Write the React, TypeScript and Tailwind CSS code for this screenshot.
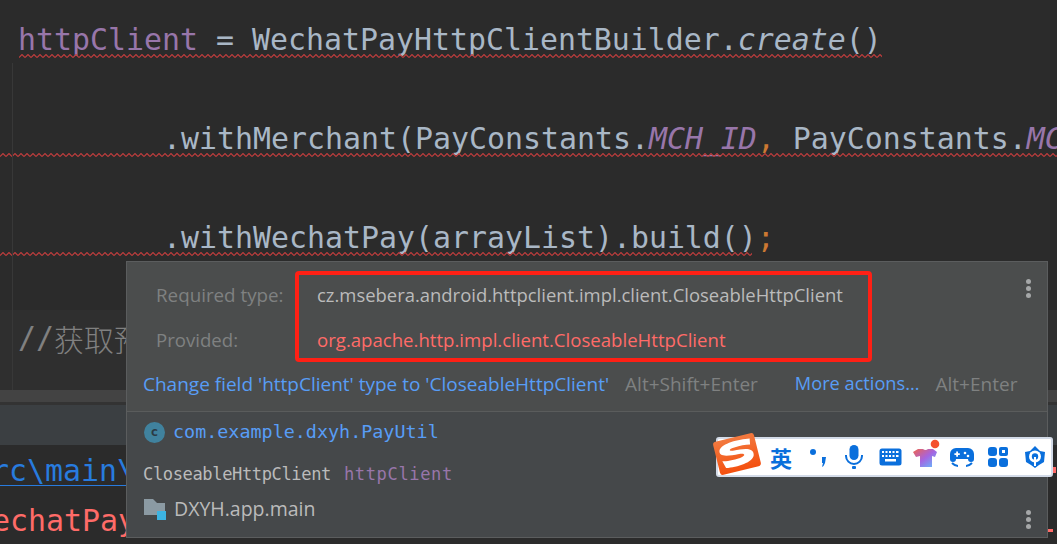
import { useId } from "react";

function Squiggle({ className }: { className: string }) {
  const id = useId();
  return (
    <svg className={className} height="4" aria-hidden="true">
      <defs>
        <pattern id={id} width="6" height="4" patternUnits="userSpaceOnUse">
          <path d="M0 3.5 L3 0.5 L6 3.5" fill="none" stroke="#c03c3c" strokeWidth="1.1" />
        </pattern>
      </defs>
      <rect width="100%" height="4" fill={`url(#${id})`} />
    </svg>
  );
}

function CodeLine({ indent, children }: { indent?: boolean; children: React.ReactNode }) {
  return (
    <div
      className={`h-[40px] whitespace-pre text-[29.9px] leading-[40px] text-[#a9b7c6] ${
        indent ? "pl-[163px]" : "pl-[18px]"
      }`}
    >
      {children}
    </div>
  );
}

function MoreDots({ className }: { className: string }) {
  return (
    <div className={`flex flex-col gap-[2px] ${className}`}>
      <div className="size-[5px] rounded-full bg-[#a5a7a8]" />
      <div className="size-[5px] rounded-full bg-[#a5a7a8]" />
      <div className="size-[5px] rounded-full bg-[#a5a7a8]" />
    </div>
  );
}

function SogouLogo() {
  return (
    <svg width="50" height="50" viewBox="0 0 50 50" className="-my-[6px] -ml-[6px] shrink-0 overflow-visible">
      <defs>
        <linearGradient id="sogou" x1="0" y1="0" x2="0" y2="1">
          <stop offset="0" stopColor="#f2793f" />
          <stop offset="1" stopColor="#f4500f" />
        </linearGradient>
      </defs>
      <g transform="rotate(-14 25 22)">
        <rect x="4" y="5" width="42" height="34" rx="3" fill="url(#sogou)" />
        <path
          d="M41 10 C30 8 13 8 9 14 C6 21 16 22 27 22.500 C34 23 33 26 27 26.500 C20 27 13 26.500 9 25.500 L11 33 C22 35 39 34 41 27 C43 19 31 18.500 23 18 C17 17.500 18 15 24 15 C30 14.500 35 15 40 16 Z"
          fill="#fff"
        />
      </g>
    </svg>
  );
}

function ImeBar() {
  return (
    <div className="absolute left-[716px] top-[437px] flex h-[40px] w-[337px] items-center rounded-[3px] border-2 border-[#d3dbe8] bg-white text-[#0a6fdc]">
      <SogouLogo />
      <span className="ml-[8px] w-[24px] font-['Noto_Sans_CJK_SC',sans-serif] text-[22px] leading-none font-bold">
        英
      </span>
      {/* punctuation mode */}
      <svg width="22" height="22" viewBox="0 0 22 22" className="ml-[14px]">
        <circle cx="5" cy="6" r="3" fill="currentColor" />
        <path d="M14 11 h4 l-1 6 q-1 3 -3 4 l1 -4 h-1 z" fill="currentColor" />
      </svg>
      {/* mic */}
      <svg width="20" height="26" viewBox="0 0 20 26" className="ml-[14px]">
        <rect x="5.500" y="1" width="9" height="15" rx="4.500" fill="currentColor" />
        <path d="M2 11 v1 a8 8 0 0 0 16 0 v-1" fill="none" stroke="currentColor" strokeWidth="2" />
        <rect x="8" y="22" width="4" height="3" rx="1" fill="currentColor" />
      </svg>
      {/* keyboard */}
      <svg width="23" height="18" viewBox="0 0 23 18" className="ml-[15px]">
        <rect x="0.500" y="0.500" width="22" height="17" rx="2.500" fill="currentColor" />
        <path
          d="M3 3h2v2H3zM6.500 3h2v2h-2zM10 3h2v2h-2zM13.500 3h2v2h-2zM17 3h2.500v2H17zM3 7h2v2H3zM6.500 7h2v2h-2zM10 7h2v2h-2zM13.500 7h2v2h-2zM17 7h2.500v2H17zM6 11h11v2.500H6z"
          fill="#fff"
        />
      </svg>
      {/* skin shirt */}
      <svg width="30" height="30" viewBox="0 0 30 30" className="ml-[9px] overflow-visible">
        <defs>
          <linearGradient id="shirt" x1="0" y1="0" x2="1" y2="1">
            <stop offset="0" stopColor="#f0634b" />
            <stop offset="0.500" stopColor="#a664e0" />
            <stop offset="1" stopColor="#5ec0ff" />
          </linearGradient>
        </defs>
        <path d="M7 7 L12 7 Q14.500 9 17 7 L22 7 L26 10 L24 15 L21 14 L21 25 L9 25 L9 14 L5 15 L2 10 Z" fill="url(#shirt)" />
        <circle cx="24" cy="2" r="4.300" fill="#f4502f" />
      </svg>
      {/* game */}
      <svg width="24" height="21" viewBox="0 0 24 21" className="ml-[9px]">
        <path d="M6 1 h12 a6 6 0 0 1 6 6 v5 a3 3 0 0 1 -6 0 H6 a3 3 0 0 1 -6 0 V7 a6 6 0 0 1 6 -6z" fill="currentColor" />
        <path d="M6 8h2V6h2v2h2v2h-2v2H8v-2H6z" fill="#fff" transform="translate(-1 -1) scale(0.9)" />
        <circle cx="15" cy="6" r="1.300" fill="#fff" />
        <circle cx="18" cy="9" r="1.300" fill="#fff" />
        <path d="M2 16 q3 3 6 3 M22 16 q-3 3 -6 3" fill="none" stroke="currentColor" strokeWidth="2" />
      </svg>
      {/* toolbox */}
      <svg width="20" height="20" viewBox="0 0 20 20" className="ml-[14px]">
        <rect width="9" height="9" rx="3" fill="currentColor" />
        <rect x="11" width="9" height="9" rx="2" fill="currentColor" />
        <rect x="14" y="3" width="3" height="3" fill="#fff" />
        <rect y="11" width="9" height="9" rx="3" fill="currentColor" />
        <rect x="11" y="11" width="9" height="9" rx="3" fill="currentColor" />
      </svg>
      {/* menu */}
      <svg width="22" height="24" viewBox="0 0 22 24" className="ml-[16px]">
        <path d="M11 1 L16 6 L21 7 L20 17 L15 20 L11 23 L7 20 L2 17 L1 7 L6 6 Z" fill="currentColor" />
        <circle cx="11" cy="11.500" r="6" fill="#fff" />
        <circle cx="11" cy="11.500" r="3.200" fill="currentColor" />
        <rect x="10" y="12" width="2" height="9" fill="#fff" />
      </svg>
    </div>
  );
}

function ProblemPopup() {
  return (
    <div className="absolute left-[126px] top-[261px] flex h-[277px] w-[922px] flex-col border border-[#5b5d5e] bg-[#4b4d4d] font-['Open_Sans',sans-serif]">
      <div className="relative h-[150px] shrink-0 border-b border-[#5a5c5c]">
        <div className="flex h-[100px] flex-col text-[18.6px]">
          <div className="flex h-[66px] items-center">
            <span className="ml-[29px] w-[161px] text-[18.8px] text-[#7f8181]">Required type:</span>
            <span className="text-[18.45px] text-[#bbbbbb]">cz.msebera.android.httpclient.impl.client.CloseableHttpClient</span>
            <MoreDots className="mr-[16px] ml-auto -mt-[14px]" />
          </div>
          <div className="mt-[1px] flex h-[22px] items-center">
            <span className="ml-[29px] w-[161px] text-[#7f8181]">Provided:</span>
            <span className="text-[#ff6b68]">org.apache.http.impl.client.CloseableHttpClient</span>
          </div>
        </div>
        <div className="flex h-[44px] items-center pl-[16px] text-[19px]">
          <span className="text-[#589df6]">Change field 'httpClient' type to 'CloseableHttpClient'</span>
          <span className="ml-[16px] text-[#7f8181]">Alt+Shift+Enter</span>
          <span className="ml-[37px] text-[18.2px] text-[#589df6]">More actions...</span>
          <span className="ml-[16px] text-[#7f8181]">Alt+Enter</span>
        </div>
        {/* red annotation drawn over the screenshot */}
        <div className="absolute left-[168px] top-[9px] h-[91px] w-[577px] rounded-[4px] border-4 border-[#ff2015]" />
      </div>
      <div className="flex grow flex-col bg-[#45484a] pl-[17px]">
        <div className="mt-[8px] flex h-[24px] items-center gap-[8px]">
          <div className="flex size-[21px] items-center justify-center rounded-full bg-[#40829e] font-['DejaVu_Sans_Mono',monospace] text-[13px] font-bold text-[#2b3a44]">
            c
          </div>
          <span className="font-['DejaVu_Sans_Mono',monospace] text-[18.4px] text-[#589df6]">com.example.dxyh.PayUtil</span>
        </div>
        <div className="-ml-[1px] mt-[20px] flex h-[20px] gap-[13px] font-['DejaVu_Sans_Mono',monospace] text-[17.1px] leading-[20px]">
          <span className="tracking-[-0.4px] text-[#bbbbbb]">CloseableHttpClient</span>
          <span className="tracking-[0.6px] text-[#9876aa]">httpClient</span>
        </div>
        <div className="mt-[13px] flex h-[24px] items-center gap-[6px]">
          <svg width="24" height="22" viewBox="0 0 24 22">
            <path d="M0 1 H9 L13 5 H21 V17 H0 Z" fill="#8b9aa3" />
            <rect x="13" y="13" width="9" height="9" fill="#3cb4e3" />
          </svg>
          <span className="text-[19.5px] text-[#bbbbbb]">DXYH.app.main</span>
          <MoreDots className="mr-[16px] mt-[20px] ml-auto" />
        </div>
      </div>
    </div>
  );
}

export default function App() {
  return (
    <div className="relative h-[544px] w-[1057px] overflow-hidden bg-[#2b2b2b] font-['DejaVu_Sans_Mono',monospace]">
      <div className="relative h-[390px] pt-[20px]">
        {/* indent guide */}
        <div className="absolute top-[63px] bottom-0 left-[12px] w-px bg-[#383838]" />
        <CodeLine>
          <span className="text-[#9876aa]">httpClient</span> = WechatPayHttpClientBuilder.<i>create</i>()
        </CodeLine>
        <Squiggle className="-mt-[6px] ml-[19px] block w-[863px]" />
        <div className="h-[61px]" />
        <CodeLine indent>
          .withMerchant(PayConstants.<i className="text-[#9876aa]">MCH_ID</i>
          <span className="text-[#cc7832]">,</span> PayConstants.<i className="text-[#9876aa]">MCH_SERIAL</i>
        </CodeLine>
        <Squiggle className="-mt-[6px] block w-full" />
        <div className="h-[61px]" />
        <CodeLine indent>
          .withWechatPay(arrayList).build()<span className="text-[#cc7832]">;</span>
        </CodeLine>
        <Squiggle className="-mt-[6px] block w-[752px]" />
        <div className="mt-[54px] flex h-[80px] items-start whitespace-pre bg-[#2f2f2f] pt-[8px] pl-[18px] text-[29.9px] leading-[40px] text-[#808080]">
          //<span className="font-['Noto_Sans_CJK_SC',sans-serif] font-light">获取预</span>
        </div>
      </div>
      <div className="h-[12px] bg-[#434343]" />
      <div className="h-[3px] bg-[#333333]" />
      <div className="h-[40px] bg-[#3b3f42]" />
      <div className="h-[99px] overflow-hidden whitespace-pre text-[29.9px]">
        <div className="-ml-[27px] h-[51px] pt-[6px] leading-[40px] text-[#287bde] underline decoration-1 underline-offset-4">
          src\main\
        </div>
        <div className="-ml-[26px] leading-[50px] text-[#ff6b68]">WechatPay</div>
      </div>
      <ProblemPopup />
      <ImeBar />
      {/* error stripe to the right of the popup */}
      <div className="absolute top-[529px] left-[1048px] h-[3px] w-[5px] bg-[#ff6b68]" />
      <div className="absolute top-[467px] left-[1053px] h-[6px] w-[3px] bg-[#ff6b68]" />
    </div>
  );
}
